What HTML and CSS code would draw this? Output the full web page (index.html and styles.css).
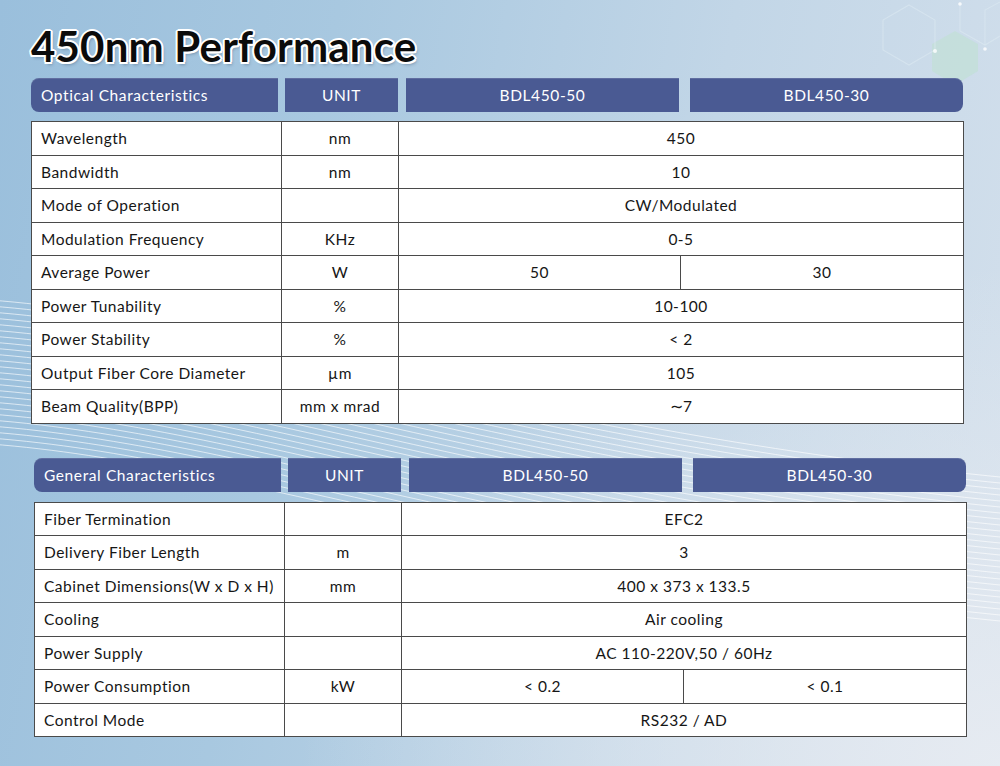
FILE: index.html
```html
<!DOCTYPE html>
<html>
<head>
<meta charset="utf-8">
<title>450nm Performance</title>
<link rel="stylesheet" href="styles.css">
</head>
<body>
<div class="page">
  <svg class="backdrop" viewBox="0 0 1000 766" preserveAspectRatio="none" aria-hidden="true">
    <defs>
      <path id="stripe" d="M -10 300 C 250 320, 520 430, 1010 478" />
    </defs>
    <g class="stripes">
      <use href="#stripe" transform="translate(0,0)"/>
      <use href="#stripe" transform="translate(0,6)"/>
      <use href="#stripe" transform="translate(0,12)"/>
      <use href="#stripe" transform="translate(0,18)"/>
      <use href="#stripe" transform="translate(0,24)"/>
      <use href="#stripe" transform="translate(0,30)"/>
      <use href="#stripe" transform="translate(0,36)"/>
      <use href="#stripe" transform="translate(0,42)"/>
      <use href="#stripe" transform="translate(0,48)"/>
      <use href="#stripe" transform="translate(0,54)"/>
      <use href="#stripe" transform="translate(0,60)"/>
      <use href="#stripe" transform="translate(0,66)"/>
      <use href="#stripe" transform="translate(0,72)"/>
      <use href="#stripe" transform="translate(0,78)"/>
      <use href="#stripe" transform="translate(0,84)"/>
      <use href="#stripe" transform="translate(0,90)"/>
      <use href="#stripe" transform="translate(0,96)"/>
      <use href="#stripe" transform="translate(0,102)"/>
      <use href="#stripe" transform="translate(0,108)"/>
      <use href="#stripe" transform="translate(0,114)"/>
      <use href="#stripe" transform="translate(0,120)"/>
      <use href="#stripe" transform="translate(0,126)"/>
      <use href="#stripe" transform="translate(0,132)"/>
      <use href="#stripe" transform="translate(0,138)"/>
      <use href="#stripe" transform="translate(0,144)"/>
    </g>
    <g class="hex">
      <polygon class="hex-fill" points="955,31 978,44 978,71 955,85 932,71 932,44"/>
      <polygon class="hex-line" points="909,5 935,20 935,50 909,65 883,50 883,20"/>
      <polyline class="hex-line" points="960,2 960,31 985,45 1000,36"/>
      <polyline class="hex-line" points="985,45 985,10 1000,2"/>
      <circle class="spark" cx="935" cy="51" r="2"/>
      <circle class="spark" cx="985" cy="49" r="1.8"/>
      <circle class="spark" cx="960" cy="4" r="1.8"/>
    </g>
  </svg>

  <h1 class="title">450nm Performance</h1>

  <section class="sheet sheet-optical">
    <div class="head">
      <div class="hb hb-name">Optical Characteristics</div>
      <div class="hb hb-unit">UNIT</div>
      <div class="hb hb-a">BDL450-50</div>
      <div class="hb hb-b">BDL450-30</div>
    </div>
    <table class="spec">
      <colgroup><col class="c1"><col class="c2"><col class="c3"><col class="c4"></colgroup>
      <tr><td class="name">Wavelength</td><td>nm</td><td colspan="2">450</td></tr>
      <tr><td class="name">Bandwidth</td><td>nm</td><td colspan="2">10</td></tr>
      <tr><td class="name">Mode of Operation</td><td></td><td colspan="2">CW/Modulated</td></tr>
      <tr><td class="name">Modulation Frequency</td><td>KHz</td><td colspan="2">0-5</td></tr>
      <tr><td class="name">Average Power</td><td>W</td><td>50</td><td>30</td></tr>
      <tr><td class="name">Power Tunability</td><td>%</td><td colspan="2">10-100</td></tr>
      <tr><td class="name">Power Stability</td><td>%</td><td colspan="2">&lt; 2</td></tr>
      <tr><td class="name">Output Fiber Core Diameter</td><td>µm</td><td colspan="2">105</td></tr>
      <tr><td class="name">Beam Quality(BPP)</td><td>mm x mrad</td><td colspan="2">∼7</td></tr>
    </table>
  </section>

  <section class="sheet sheet-general">
    <div class="head">
      <div class="hb hb-name">General Characteristics</div>
      <div class="hb hb-unit">UNIT</div>
      <div class="hb hb-a">BDL450-50</div>
      <div class="hb hb-b">BDL450-30</div>
    </div>
    <table class="spec">
      <colgroup><col class="c1"><col class="c2"><col class="c3"><col class="c4"></colgroup>
      <tr><td class="name">Fiber Termination</td><td></td><td colspan="2">EFC2</td></tr>
      <tr><td class="name">Delivery Fiber Length</td><td>m</td><td colspan="2">3</td></tr>
      <tr><td class="name">Cabinet Dimensions(W x D x H)</td><td>mm</td><td colspan="2">400 x 373 x 133.5</td></tr>
      <tr><td class="name">Cooling</td><td></td><td colspan="2">Air cooling</td></tr>
      <tr><td class="name">Power Supply</td><td></td><td colspan="2">AC 110-220V,50 / 60Hz</td></tr>
      <tr><td class="name">Power Consumption</td><td>kW</td><td>&lt; 0.2</td><td>&lt; 0.1</td></tr>
      <tr><td class="name">Control Mode</td><td></td><td colspan="2">RS232 / AD</td></tr>
    </table>
  </section>
</div>
</body>
</html>
```

FILE: styles.css
```css
html, body {
  margin: 0;
  padding: 0;
}

body {
  width: 1000px;
  height: 766px;
  overflow: hidden;
  font-family: "Lato", "Noto Sans", sans-serif;
  color: #161616;
}

.page {
  position: relative;
  width: 1000px;
  height: 766px;
  box-sizing: border-box;
  padding-top: 25px;
  background:
    radial-gradient(ellipse 700px 500px at 1000px 766px, rgba(232,236,242,0.9), rgba(232,236,242,0) 100%),
    linear-gradient(100deg, #9abfdc 0%, #a8c8e0 30%, #c2d6e7 65%, #d4e0ec 100%);
}

.backdrop {
  position: absolute;
  left: 0;
  top: 0;
  width: 1000px;
  height: 766px;
  z-index: 0;
}

.stripes use {
  fill: none;
  stroke: rgba(255,255,255,0.7);
  stroke-width: 0.9;
}

.hex-fill {
  fill: #c4dedb;
  opacity: 0.95;
}

.hex-line {
  fill: none;
  stroke: rgba(220,234,242,0.6);
  stroke-width: 1.1;
}

.spark {
  fill: #ffffff;
  opacity: 0.8;
}

.title {
  position: relative;
  z-index: 1;
  margin: 0 0 11px 31px;
  height: 42px;
  font-family: "Lato", sans-serif;
  font-weight: 700;
  font-size: 42px;
  line-height: 42px;
  letter-spacing: 0.2px;
  color: #0b0b0b;
  text-shadow:
    2px 0 0 #fff, -2px 0 0 #fff, 0 2px 0 #fff, 0 -2px 0 #fff,
    1.5px 1.5px 0 #fff, -1.5px 1.5px 0 #fff, 1.5px -1.5px 0 #fff, -1.5px -1.5px 0 #fff,
    2px 3px 3px rgba(40,60,90,0.35);
}

.sheet {
  position: relative;
  z-index: 1;
  width: 932px;
}

.sheet-optical {
  margin-left: 31px;
}

.sheet-general {
  margin-left: 34px;
  margin-top: 34px;
}

.head {
  display: flex;
  height: 34px;
  margin-bottom: 9px;
}

.sheet-general .head {
  margin-bottom: 10px;
}

.hb {
  display: flex;
  align-items: center;
  justify-content: center;
  background: #4a5a93;
  color: #ffffff;
  font-size: 15.5px;
  letter-spacing: 0.6px;
  box-shadow: inset 0 1px 0 rgba(255,255,255,0.12);
}

.hb-name {
  width: 247px;
  justify-content: flex-start;
  padding-left: 10px;
  box-sizing: border-box;
  border-radius: 8px 0 0 8px;
}

.hb-unit {
  width: 113px;
  margin-left: 7px;
}

.hb-a {
  width: 273px;
  margin-left: 8px;
}

.hb-b {
  flex: 1;
  margin-left: 11px;
  border-radius: 0 8px 8px 0;
}

.spec {
  width: 932px;
  table-layout: fixed;
  border-collapse: collapse;
  background: #ffffff;
  border: 1px solid #2e2e2e;
}

.c1 { width: 250px; }
.c2 { width: 117px; }
.c3 { width: 282px; }
.c4 { width: 283px; }

.spec tr {
  height: 33.5px;
}

.spec td {
  border: 1px solid #4a4a4a;
  padding: 0;
  text-align: center;
  vertical-align: middle;
  font-size: 15.5px;
  letter-spacing: 0.5px;
  white-space: nowrap;
  color: #161616;
}

.spec td.name {
  text-align: left;
  padding-left: 9px;
}
```
